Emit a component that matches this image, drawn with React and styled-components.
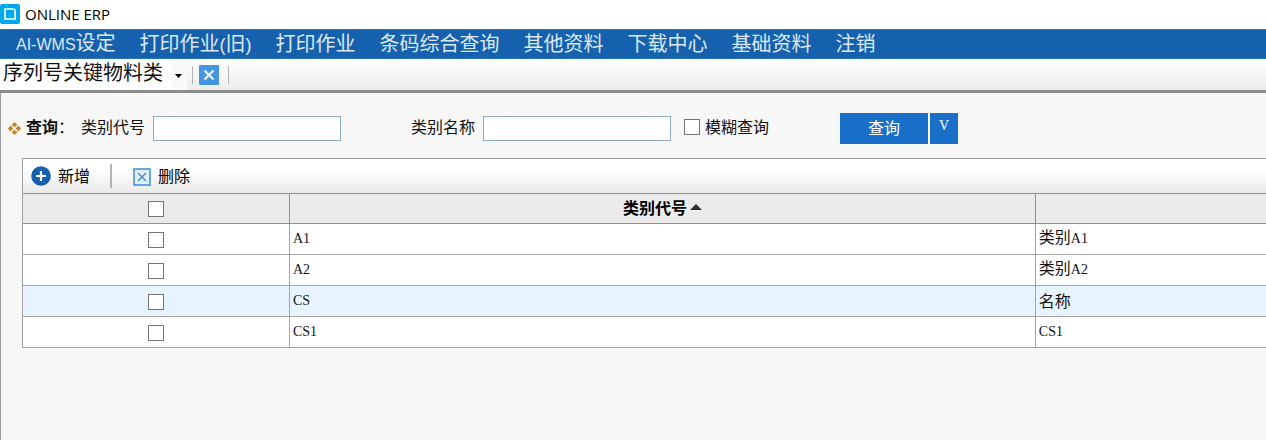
import React, { useState } from 'react';
import styled, { createGlobalStyle } from 'styled-components';

const GlobalStyle = createGlobalStyle`
  *, *::before, *::after {
    box-sizing: border-box;
  }

  body {
    margin: 0;
    background: #f7f7f7;
    color: #111;
    font-family: 'Liberation Sans', 'Noto Sans CJK SC', sans-serif;
    font-size: 16px;
    line-height: 24px;
    overflow-x: hidden;
  }

  button, input, select {
    font: inherit;
    color: inherit;
    margin: 0;
  }
`;

const Page = styled.div`
  display: flex;
  flex-direction: column;
  min-height: 100vh;
`;

const TitleBar = styled.header`
  display: flex;
  align-items: center;
  gap: 5px;
  height: 29px;
  padding-bottom: 1px;
  background: #fff;
  color: #000;
  font-family: 'Open Sans', 'Noto Sans', sans-serif;
  font-size: 15px;

  svg {
    display: block;
  }
`;

const MenuBar = styled.nav`
  display: flex;
  align-items: center;
  gap: 24px;
  height: 30px;
  padding: 0 16px;
  background: #1661ae;
  border-top: 1px solid #2a74b8;
  border-bottom: 1px solid #2a74b8;
`;

const MenuLink = styled.a`
  color: #dce9f7;
  font-size: 20px;
  line-height: 28px;
  text-decoration: none;
  white-space: nowrap;
`;

const MenuLatin = styled.span`
  font-size: ${({ $size }) => $size || '16px'};
`;

const TabBar = styled.div`
  display: flex;
  align-items: center;
  height: 34px;
  background: linear-gradient(#fdfdfd, #ededed);
  border-bottom: 3px solid #8c8c8c;
`;

const TabPicker = styled.div`
  position: relative;
  width: 187px;
  height: 30px;
  background: linear-gradient(to right, #fff 172px, #fafafa 172px);

  svg {
    position: absolute;
    right: 5px;
    top: 14px;
    pointer-events: none;
  }
`;

const TabSelect = styled.select`
  appearance: none;
  display: block;
  width: 100%;
  height: 26px;
  padding: 0 0 2px 3px;
  border: 0;
  background: transparent;
  color: #111;
  font-family: 'Noto Sans CJK SC', sans-serif;
  font-size: 20px;
  line-height: 24px;
`;

const Separator = styled.span`
  width: ${({ $wide }) => ($wide ? '2px' : '1px')};
  height: ${({ $wide }) => ($wide ? '24px' : '18px')};
  margin: 0 ${({ $after }) => $after || 0} 0 ${({ $before }) => $before || 0};
  background: #b4b4b4;
`;

const IconButton = styled.button`
  display: flex;
  padding: 0;
  border: 0;
  background: none;
`;

const Content = styled.main`
  flex: 1;
  padding: 20px 0 40px 7px;
  border-left: 1px solid #9c9c9c;
`;

const QueryForm = styled.form`
  display: flex;
  align-items: center;
  height: 31px;
  font-family: 'Noto Sans CJK SC', sans-serif;
  white-space: nowrap;
`;

const Caption = styled.span`
  padding-bottom: 5px;
`;

const QueryTitle = styled(Caption)`
  width: 55px;
  margin-left: 5px;
`;

const Field = styled.label`
  display: flex;
  align-items: center;
  gap: 8px;
  margin-right: ${({ $after }) => $after};
`;

const TextBox = styled.input`
  width: 188px;
  height: 25px;
  padding: 0 4px;
  border: 1px solid #8fabc8;
  background: #fff;
  outline: 0;
`;

const Check = styled.input`
  appearance: none;
  display: block;
  width: 16px;
  height: 16px;
  border: 1px solid #747474;
  background: #fff;

  &:checked {
    background: #1a6fc9;
    box-shadow: inset 0 0 0 3px #fff;
  }
`;

const CheckField = styled.label`
  display: flex;
  align-items: center;
  gap: 5px;
  margin-right: 71px;

  ${Check} {
    margin-bottom: 4px;
  }
`;

const BlueButton = styled.button`
  width: ${({ $width }) => $width};
  height: 31px;
  margin-right: 2px;
  padding: 0 0 4px;
  border: 0;
  background: #1a6fc9;
  color: #fff;
`;

const MoreButton = styled(BlueButton)`
  padding-bottom: 6px;
  font-family: 'Liberation Serif', serif;
  font-size: 14px;
`;

const Panel = styled.section`
  margin: 14px 0 0 14px;
  border-left: 1px solid #a0a0a0;
  border-top: 1px solid #a0a0a0;
`;

const Toolbar = styled.div`
  display: flex;
  align-items: center;
  height: 34px;
  padding-left: 8px;
  background: linear-gradient(#fff 30%, #e9e9e9);
`;

const ToolButton = styled.button`
  display: flex;
  align-items: center;
  gap: 7px;
  padding: 0;
  border: 0;
  background: none;
  color: #000;
  font-family: 'Noto Sans CJK SC', sans-serif;

  span {
    padding-bottom: 2px;
  }
`;

const Grid = styled.table`
  width: 100%;
  border-spacing: 0;
  table-layout: fixed;
  background: #fff;
  font-family: 'Noto Sans CJK SC', sans-serif;
`;

const HeadCell = styled.th`
  width: ${({ $width }) => $width};
  height: 31px;
  padding: 0 0 4px;
  border: solid #909090;
  border-width: 1px 1px 1px 0;
  background: #ebebeb;
  color: #000;
  font-weight: 700;

  &:last-child {
    border-right: 0;
  }

  ${Check} {
    margin: 4px auto 0;
  }
`;

const SortButton = styled.button`
  display: inline-flex;
  align-items: center;
  gap: 3px;
  padding: 0;
  border: 0;
  background: none;
  font-weight: 700;
`;

const Row = styled.tr`
  background: ${({ $active }) => ($active ? '#e7f3ff' : '#fff')};
`;

const Cell = styled.td`
  height: 31px;
  padding: 0 3px 3px;
  border: solid #a4a4a4;
  border-width: 0 1px 1px 0;

  &:last-child {
    border-right: 0;
  }

  ${Check} {
    margin: 4px auto 0;
  }
`;

const Code = styled.span`
  font-family: 'Liberation Serif', serif;
  font-size: 14px;
`;

const LogoIcon = () => (
  <svg width="20" height="20" viewBox="0 0 20 20" aria-hidden="true">
    <rect width="20" height="20" rx="2" fill="#00a8ec" />
    <path d="M5 5h10v10H5z" fill="none" stroke="#fff" strokeWidth="1.6" />
    <path d="M14 4.2h2v2" fill="none" stroke="#00a8ec" strokeWidth="1" />
  </svg>
);

const CloseIcon = () => (
  <svg width="20" height="20" viewBox="0 0 20 20" aria-hidden="true">
    <rect width="20" height="20" rx="1" fill="#4494df" />
    <path d="M5.5 5.5l9 9M14.5 5.5l-9 9" stroke="#e8f2fc" strokeWidth="2.4" />
  </svg>
);

const DiamondsIcon = () => (
  <svg width="13" height="13" viewBox="0 0 13 13" aria-hidden="true">
    <path
      d="M6.5 0l2.9 2.7-2.9 2.6-2.9-2.6zM6.5 7.7l2.9 2.6L6.5 13l-2.9-2.7zM2.7 3.6l2.6 2.9-2.6 2.9L0 6.5zM10.3 3.6L13 6.5l-2.7 2.9-2.6-2.9z"
      fill="#c08434"
    />
  </svg>
);

const AddIcon = () => (
  <svg width="20" height="20" viewBox="0 0 20 20" aria-hidden="true">
    <circle cx="10" cy="10" r="9.8" fill="#1661ae" />
    <path d="M10 5v10M5 10h10" stroke="#fff" strokeWidth="2.2" />
  </svg>
);

const DeleteIcon = () => (
  <svg width="18" height="20" viewBox="0 -2 18 20" aria-hidden="true">
    <rect x="1" y="1" width="16" height="16" fill="#e3f1ff" stroke="#4494df" strokeWidth="1.6" />
    <path d="M5 5l8 8M13 5l-8 8" stroke="#3c8ad4" strokeWidth="1.4" />
  </svg>
);

const menu = ['打印作业(旧)', '打印作业', '条码综合查询', '其他资料', '下载中心', '基础资料', '注销'];

const rows = [
  { code: 'A1', name: '类别', suffix: 'A1' },
  { code: 'A2', name: '类别', suffix: 'A2' },
  { code: 'CS', name: '名称', active: true },
  { code: 'CS1', suffix: 'CS1' },
];

// latin letters and brackets have their own size next to the Chinese text
const MenuText = ({ text }) =>
  text
    .split(/([()])/)
    .map((part, i) => (/[()]/.test(part) ? <MenuLatin $size="18px" key={i}>{part}</MenuLatin> : part));

const App = () => {
  const [checked, setChecked] = useState([]);

  const toggle = (code) =>
    setChecked(checked.includes(code) ? checked.filter((c) => c !== code) : [...checked, code]);

  const toggleAll = () => setChecked(checked.length === rows.length ? [] : rows.map((r) => r.code));

  return (
    <Page>
      <GlobalStyle />
      <TitleBar>
        <LogoIcon />
        <span>ONLINE ERP</span>
      </TitleBar>

      <MenuBar>
        <MenuLink href="#">
          <MenuLatin>AI-WMS</MenuLatin>设定
        </MenuLink>
        {menu.map((item) => (
          <MenuLink href="#" key={item}>
            <MenuText text={item} />
          </MenuLink>
        ))}
      </MenuBar>

      <TabBar>
        <TabPicker>
          <TabSelect aria-label="序列号关键物料类">
            <option>序列号关键物料类</option>
          </TabSelect>
          <svg width="7" height="4" viewBox="0 0 7 4" aria-hidden="true">
            <path d="M0 0h7L3.5 4z" fill="#000" />
          </svg>
        </TabPicker>
        <Separator $before="5px" $after="6px" />
        <IconButton type="button" aria-label="关闭">
          <CloseIcon />
        </IconButton>
        <Separator $before="9px" />
      </TabBar>

      <Content>
        <QueryForm onSubmit={(e) => e.preventDefault()}>
          <DiamondsIcon />
          <QueryTitle>
            <strong>查询</strong>：
          </QueryTitle>
          <Field $after="70px">
            <Caption>类别代号</Caption>
            <TextBox type="text" />
          </Field>
          <Field $after="13px">
            <Caption>类别名称</Caption>
            <TextBox type="text" />
          </Field>
          <CheckField>
            <Check type="checkbox" />
            <Caption>模糊查询</Caption>
          </CheckField>
          <BlueButton type="submit" $width="88px">查询</BlueButton>
          <MoreButton type="button" $width="28px">V</MoreButton>
        </QueryForm>

        <Panel>
          <Toolbar>
            <ToolButton type="button">
              <AddIcon />
              <span>新增</span>
            </ToolButton>
            <Separator $wide $before="20px" $after="21px" />
            <ToolButton type="button">
              <DeleteIcon />
              <span>删除</span>
            </ToolButton>
          </Toolbar>

          <Grid>
            <thead>
              <tr>
                <HeadCell $width="267px">
                  <Check
                    type="checkbox"
                    aria-label="全选"
                    checked={checked.length === rows.length}
                    onChange={toggleAll}
                  />
                </HeadCell>
                <HeadCell $width="60%" aria-sort="ascending">
                  <SortButton type="button">
                    类别代号
                    <svg width="12" height="6" viewBox="0 0 12 6" aria-hidden="true">
                      <path d="M0 6L6 0l6 6z" fill="#2b3338" />
                    </svg>
                  </SortButton>
                </HeadCell>
                <HeadCell as="td" />
              </tr>
            </thead>
            <tbody>
              {rows.map((row) => (
                <Row key={row.code} $active={row.active}>
                  <Cell>
                    <Check
                      type="checkbox"
                      aria-label={row.code}
                      checked={checked.includes(row.code)}
                      onChange={() => toggle(row.code)}
                    />
                  </Cell>
                  <Cell>
                    <Code>{row.code}</Code>
                  </Cell>
                  <Cell>
                    {row.name}
                    {row.suffix && <Code>{row.suffix}</Code>}
                  </Cell>
                </Row>
              ))}
            </tbody>
          </Grid>
        </Panel>
      </Content>
    </Page>
  );
};

export default App;
